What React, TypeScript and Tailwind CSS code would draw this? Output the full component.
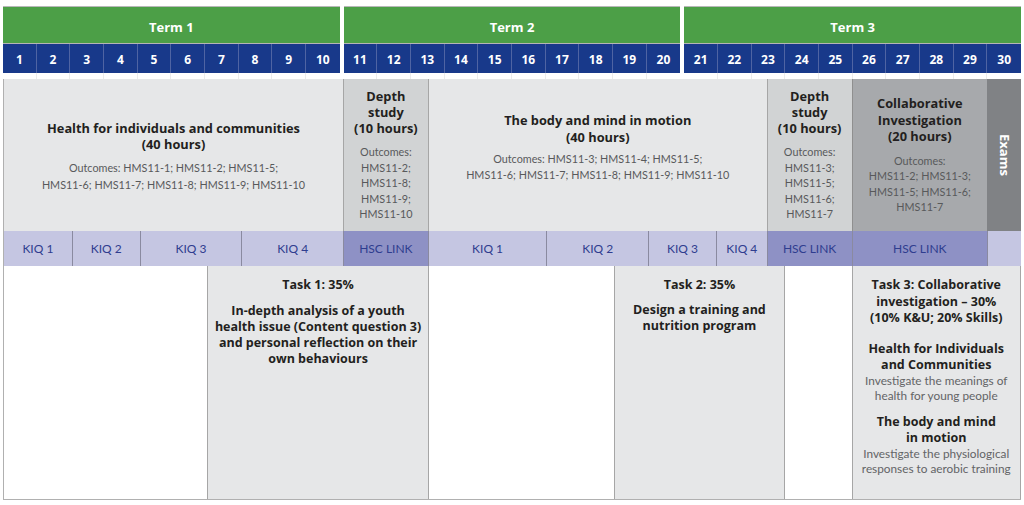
import React from "react";

const terms = [
  { name: "Term 1", weeks: [1, 2, 3, 4, 5, 6, 7, 8, 9, 10] },
  { name: "Term 2", weeks: [11, 12, 13, 14, 15, 16, 17, 18, 19, 20] },
  { name: "Term 3", weeks: [21, 22, 23, 24, 25, 26, 27, 28, 29, 30] },
];

const kiqs: { label: string; span: string; hsc?: boolean }[] = [
  { label: "KIQ 1", span: "col-span-4" },
  { label: "KIQ 2", span: "col-span-4" },
  { label: "KIQ 3", span: "col-span-6" },
  { label: "KIQ 4", span: "col-span-6" },
  { label: "HSC LINK", span: "col-span-5", hsc: true },
  { label: "KIQ 1", span: "col-span-7" },
  { label: "KIQ 2", span: "col-span-6" },
  { label: "KIQ 3", span: "col-span-4" },
  { label: "KIQ 4", span: "col-span-3" },
  { label: "HSC LINK", span: "col-span-5", hsc: true },
  { label: "HSC LINK", span: "col-span-8", hsc: true },
  { label: "", span: "col-span-2" },
];

// headings use a wider bold face, body copy stays in Lato
const bold = "font-['Open_Sans',_'Liberation_Sans',_sans-serif] font-bold";

const Outcomes: React.FC<{ children: React.ReactNode; className?: string }> = ({ children, className }) => (
  <p className={`text-[10.8px] leading-[15.5px] text-[#58595b] ${className ?? ""}`}>{children}</p>
);

export default function App() {
  return (
    <div className="w-[1024px] h-[505px] bg-white pl-[3px] pt-[6px] font-['Lato',_'Liberation_Sans',_sans-serif] text-[#231f20]">
      <div className="w-[1018px]">
        {/* Term header */}
        <div className="grid grid-cols-3 gap-[4px]">
          {terms.map((term) => (
            <div key={term.name} className="flex flex-col">
              <div className={`h-[37px] bg-[#4c9f47] border-t border-[#b8b8b8] flex items-center justify-center text-white text-[13px] pt-[5px] ${bold}`}>
                {term.name}
              </div>
              <div className="h-px bg-[#b5b5b5]" />
              <div className="grid grid-cols-10 h-[29px] bg-[#18398a]">
                {term.weeks.map((w) => (
                  <div
                    key={w}
                    className={`flex items-center justify-center text-white text-[12px] pt-[2px] border-r border-[#4f64a3] last:border-r-0 ${bold}`}
                  >
                    {w}
                  </div>
                ))}
              </div>
              <div className="grid grid-cols-10 h-[6px]">
                {term.weeks.map((w) => (
                  <div key={w} className="border-r border-[#ececec] last:border-r-0" />
                ))}
              </div>
            </div>
          ))}
        </div>

        {/* Main grid */}
        <div className="grid grid-cols-60 grid-rows-[152px_35px_233px] border-l border-b border-[#b0b0b0]">
          {/* Content row */}
          <div className="col-span-20 bg-[#e6e7e8] flex flex-col items-center justify-center text-center pt-[2px]">
            <h3 className={`text-[12.8px] leading-[16.5px] ${bold}`}>
              Health for individuals and communities
              <br />
              (40 hours)
            </h3>
            <Outcomes className="mt-[6px] leading-[17px]">
              Outcomes: HMS11-1; HMS11-2; HMS11-5;
              <br />
              HMS11-6; HMS11-7; HMS11-8; HMS11-9; HMS11-10
            </Outcomes>
          </div>
          <div className="col-span-5 bg-[#d1d3d4] border-l border-[#a6a6a6] flex flex-col items-center justify-center text-center">
            <h3 className={`text-[12.8px] leading-[16px] ${bold}`}>
              Depth
              <br />
              study
              <br />
              (10 hours)
            </h3>
            <Outcomes className="mt-[8px]">
              Outcomes:
              <br />
              HMS11-2;
              <br />
              HMS11-8;
              <br />
              HMS11-9;
              <br />
              HMS11-10
            </Outcomes>
          </div>
          <div className="col-span-20 bg-[#e6e7e8] border-l border-[#a6a6a6] flex flex-col items-center justify-center text-center pb-[15px]">
            <h3 className={`text-[12.8px] leading-[16.5px] ${bold}`}>
              The body and mind in motion
              <br />
              (40 hours)
            </h3>
            <Outcomes className="mt-[6px] leading-[16px]">
              Outcomes: HMS11-3; HMS11-4; HMS11-5;
              <br />
              HMS11-6; HMS11-7; HMS11-8; HMS11-9; HMS11-10
            </Outcomes>
          </div>
          <div className="col-span-5 bg-[#d1d3d4] border-l border-[#a6a6a6] flex flex-col items-center justify-center text-center">
            <h3 className={`text-[12.8px] leading-[16px] ${bold}`}>
              Depth
              <br />
              study
              <br />
              (10 hours)
            </h3>
            <Outcomes className="mt-[8px]">
              Outcomes:
              <br />
              HMS11-3;
              <br />
              HMS11-5;
              <br />
              HMS11-6;
              <br />
              HMS11-7
            </Outcomes>
          </div>
          <div className="col-span-8 bg-[#a7a9ac] border-l border-[#8f8f8f] flex flex-col items-center justify-center text-center">
            <h3 className={`text-[12.8px] leading-[16.5px] ${bold}`}>
              Collaborative
              <br />
              Investigation
              <br />
              (20 hours)
            </h3>
            <Outcomes className="mt-[8px] text-[#3f4042]">
              Outcomes:
              <br />
              HMS11-2; HMS11-3;
              <br />
              HMS11-5; HMS11-6;
              <br />
              HMS11-7
            </Outcomes>
          </div>
          <div className="col-span-2 bg-[#808285] flex items-center justify-center">
            <span className={`[writing-mode:vertical-rl] text-white text-[13px] ${bold}`}>Exams</span>
          </div>

          {/* KIQ row */}
          {kiqs.map((k, i) => (
            <div
              key={i}
              className={`${k.span} flex items-center justify-center text-[12px] pt-px text-[#2f3d8f] ${
                k.hsc ? "bg-[#8e91c5]" : "bg-[#c5c6e2]"
              } ${i > 0 ? "border-l border-[#8a8aa0]" : ""}`}
            >
              {k.label}
            </div>
          ))}

          {/* Task row */}
          <div className="col-span-12 bg-white" />
          <div className={`col-span-13 bg-[#e6e7e8] border-l border-[#a6a6a6] flex flex-col items-center text-center pt-[11px] text-[12.5px] leading-[16px] ${bold}`}>
            <p>Task 1: 35%</p>
            <p className="mt-[10px]">
              In-depth analysis of a youth
              <br />
              health issue (Content question 3)
              <br />
              and personal reflection on their
              <br />
              own behaviours
            </p>
          </div>
          <div className="col-span-11 bg-white border-l border-[#a6a6a6]" />
          <div className={`col-span-10 bg-[#e6e7e8] border-l border-[#a6a6a6] flex flex-col items-center text-center pt-[11px] text-[12.5px] leading-[16px] ${bold}`}>
            <p>Task 2: 35%</p>
            <p className="mt-[9px]">
              Design a training and
              <br />
              nutrition program
            </p>
          </div>
          <div className="col-span-4 bg-white border-l border-[#a6a6a6]" />
          <div className="col-span-10 bg-[#e6e7e8] border-l border-r border-[#a6a6a6] flex flex-col items-center text-center pt-[11px]">
            <p className={`text-[12.5px] leading-[16.5px] ${bold}`}>
              Task 3: Collaborative
              <br />
              investigation – 30%
              <br />
              (10% K&amp;U; 20% Skills)
            </p>
            <p className={`mt-[14px] text-[12.5px] leading-[16px] ${bold}`}>
              Health for Individuals
              <br />
              and Communities
            </p>
            <p className="text-[11.8px] leading-[15px] text-[#636466]">
              Investigate the meanings of
              <br />
              health for young people
            </p>
            <p className={`mt-[11px] text-[12.5px] leading-[16px] ${bold}`}>
              The body and mind
              <br />
              in motion
            </p>
            <p className="text-[11.8px] leading-[15px] text-[#636466]">
              Investigate the physiological
              <br />
              responses to aerobic training
            </p>
          </div>
        </div>
      </div>
    </div>
  );
}
